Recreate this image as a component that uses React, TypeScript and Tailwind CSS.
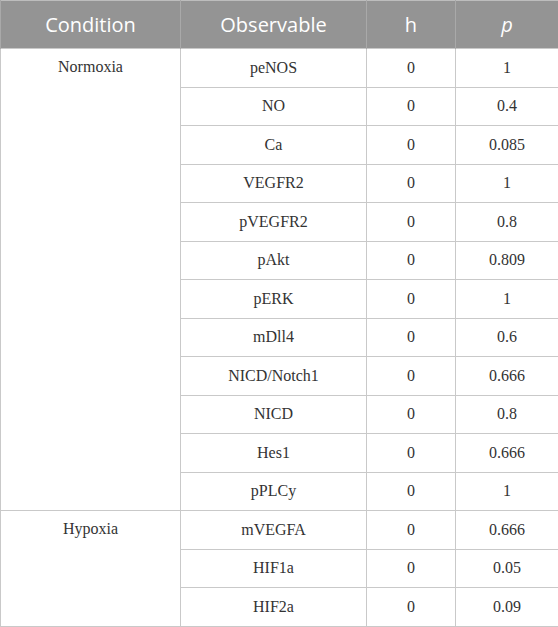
const normoxia: [string, string][] = [
  ["peNOS", "1"],
  ["NO", "0.4"],
  ["Ca", "0.085"],
  ["VEGFR2", "1"],
  ["pVEGFR2", "0.8"],
  ["pAkt", "0.809"],
  ["pERK", "1"],
  ["mDll4", "0.6"],
  ["NICD/Notch1", "0.666"],
  ["NICD", "0.8"],
  ["Hes1", "0.666"],
  ["pPLCy", "1"],
];

const hypoxia: [string, string][] = [
  ["mVEGFA", "0.666"],
  ["HIF1a", "0.05"],
  ["HIF2a", "0.09"],
];

const groups = [
  { name: "Normoxia", rows: normoxia },
  { name: "Hypoxia", rows: hypoxia },
];

const cell = "border border-[#c9c9c9] text-center align-middle";

export default function App() {
  return (
    <div className="w-[558px] bg-white">
      <table
        className="w-[558px] table-fixed border-collapse border border-[#bdbdbd] text-[16px] text-[#333333]"
        style={{ fontFamily: '"Liberation Serif", serif' }}
      >
        <colgroup>
          <col className="w-[180px]" />
          <col className="w-[186px]" />
          <col className="w-[89px]" />
          <col className="w-[103px]" />
        </colgroup>
        <thead>
          <tr
            className="h-[48px] bg-[#949494] text-[20px] font-normal text-white"
            style={{ fontFamily: '"Open Sans", sans-serif' }}
          >
            <th className="border-x border-[#a9a9a9] font-normal">Condition</th>
            <th className="border-x border-[#a9a9a9] font-normal">Observable</th>
            <th className="border-x border-[#a9a9a9] font-normal">h</th>
            <th className="border-x border-[#a9a9a9] font-normal italic">p</th>
          </tr>
        </thead>
        <tbody>
          {groups.map((g) =>
            g.rows.map(([obs, p], i) => (
              <tr key={g.name + obs} className="h-[38.5px]">
                {i === 0 && (
                  <td
                    rowSpan={g.rows.length}
                    className="border border-[#c9c9c9] pt-[6px] text-center align-top"
                  >
                    {g.name}
                  </td>
                )}
                <td className={cell}>{obs}</td>
                <td className={cell}>0</td>
                <td className={cell}>{p}</td>
              </tr>
            )),
          )}
        </tbody>
      </table>
    </div>
  );
}
